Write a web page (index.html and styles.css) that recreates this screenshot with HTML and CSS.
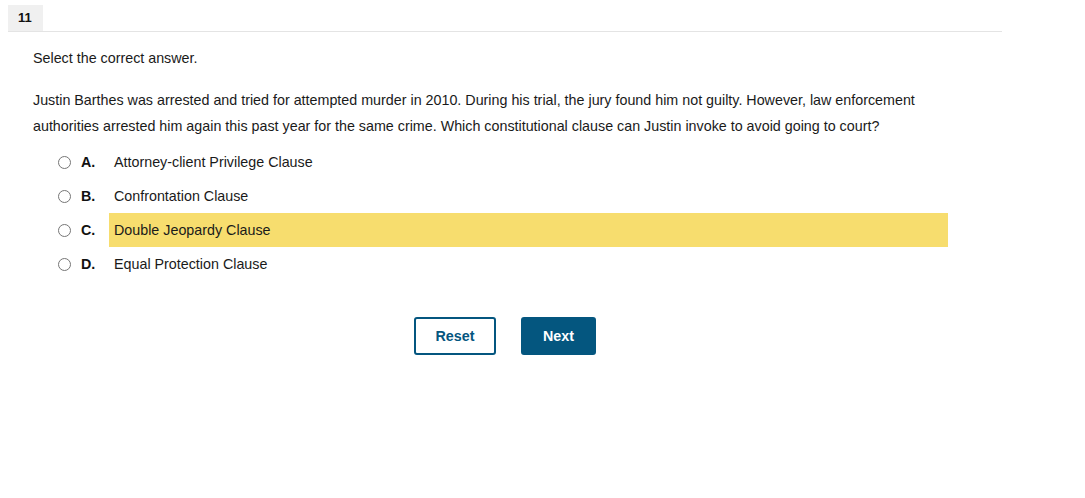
FILE: index.html
```html
<!DOCTYPE html>
<html>
<head>
<meta charset="utf-8">
<link rel="stylesheet" href="styles.css">
</head>
<body>
<div class="page">
  <div class="header">
    <div class="badge">11</div>
  </div>
  <div class="content">
    <p class="instr">Select the correct answer.</p>
    <p class="question">Justin Barthes was arrested and tried for attempted murder in 2010. During his trial, the jury found him not guilty. However, law enforcement authorities arrested him again this past year for the same crime. Which constitutional clause can Justin invoke to avoid going to court?</p>
    <div class="options">
      <label class="opt"><span class="radio"></span><span class="letter">A.</span><span class="text">Attorney-client Privilege Clause</span></label>
      <label class="opt"><span class="radio"></span><span class="letter">B.</span><span class="text">Confrontation Clause</span></label>
      <label class="opt"><span class="radio"></span><span class="letter">C.</span><span class="text hl">Double Jeopardy Clause</span></label>
      <label class="opt"><span class="radio"></span><span class="letter">D.</span><span class="text">Equal Protection Clause</span></label>
    </div>
  </div>
  <div class="buttons">
    <button class="btn reset">Reset</button>
    <button class="btn next">Next</button>
  </div>
</div>
</body>
</html>
```
FILE: styles.css
```css
html, body { margin: 0; padding: 0; background: #fff; }
body {
  font-family: "Liberation Sans", Arial, sans-serif;
  font-size: 14.3px;
  color: #1a1a1a;
}
.page {
  width: 994px;
  margin-left: 8px;
  padding-top: 5px;
}
.header {
  border-bottom: 1px solid #e4e4e4;
  display: flex;
}
.badge {
  background: #f0f0f0;
  width: 35px;
  height: 26px;
  box-sizing: border-box;
  padding-left: 10px;
  line-height: 25px;
  font-weight: bold;
  font-size: 13px;
  color: #111;
}
.content {
  padding-left: 25px;
}
.instr {
  margin: 18px 0 0 0;
  line-height: 17px;
}
.question {
  margin: 20px 0 0 0;
  line-height: 26px;
  width: 900px;
}
.options {
  display: flex;
  flex-direction: column;
  margin-top: 6px;
  margin-left: 24px;
}
.opt {
  display: flex;
  align-items: center;
  height: 34px;
}
.radio {
  width: 11px;
  height: 11px;
  border: 1px solid #767676;
  border-radius: 50%;
  margin-right: 10px;
  margin-left: 1px;
  background: #fff;
}
.letter {
  font-weight: bold;
  width: 28px;
  color: #111;
}
.text {
  display: flex;
  align-items: center;
  height: 34px;
  padding-left: 5px;
  flex: 0 0 auto;
  width: 839px;
  box-sizing: border-box;
}
.hl {
  background: #f7dd6e;
}
.buttons {
  display: flex;
  justify-content: center;
  gap: 25px;
  margin-top: 36px;
}
.btn {
  font-family: "Liberation Sans", Arial, sans-serif;
  font-size: 14.3px;
  font-weight: bold;
  height: 38px;
  border-radius: 3px;
  box-sizing: border-box;
  cursor: pointer;
}
.reset {
  width: 82px;
  background: #fff;
  border: 2px solid #04567f;
  color: #04567f;
}
.next {
  width: 75px;
  background: #04567f;
  border: 2px solid #04567f;
  color: #fff;
}
```
